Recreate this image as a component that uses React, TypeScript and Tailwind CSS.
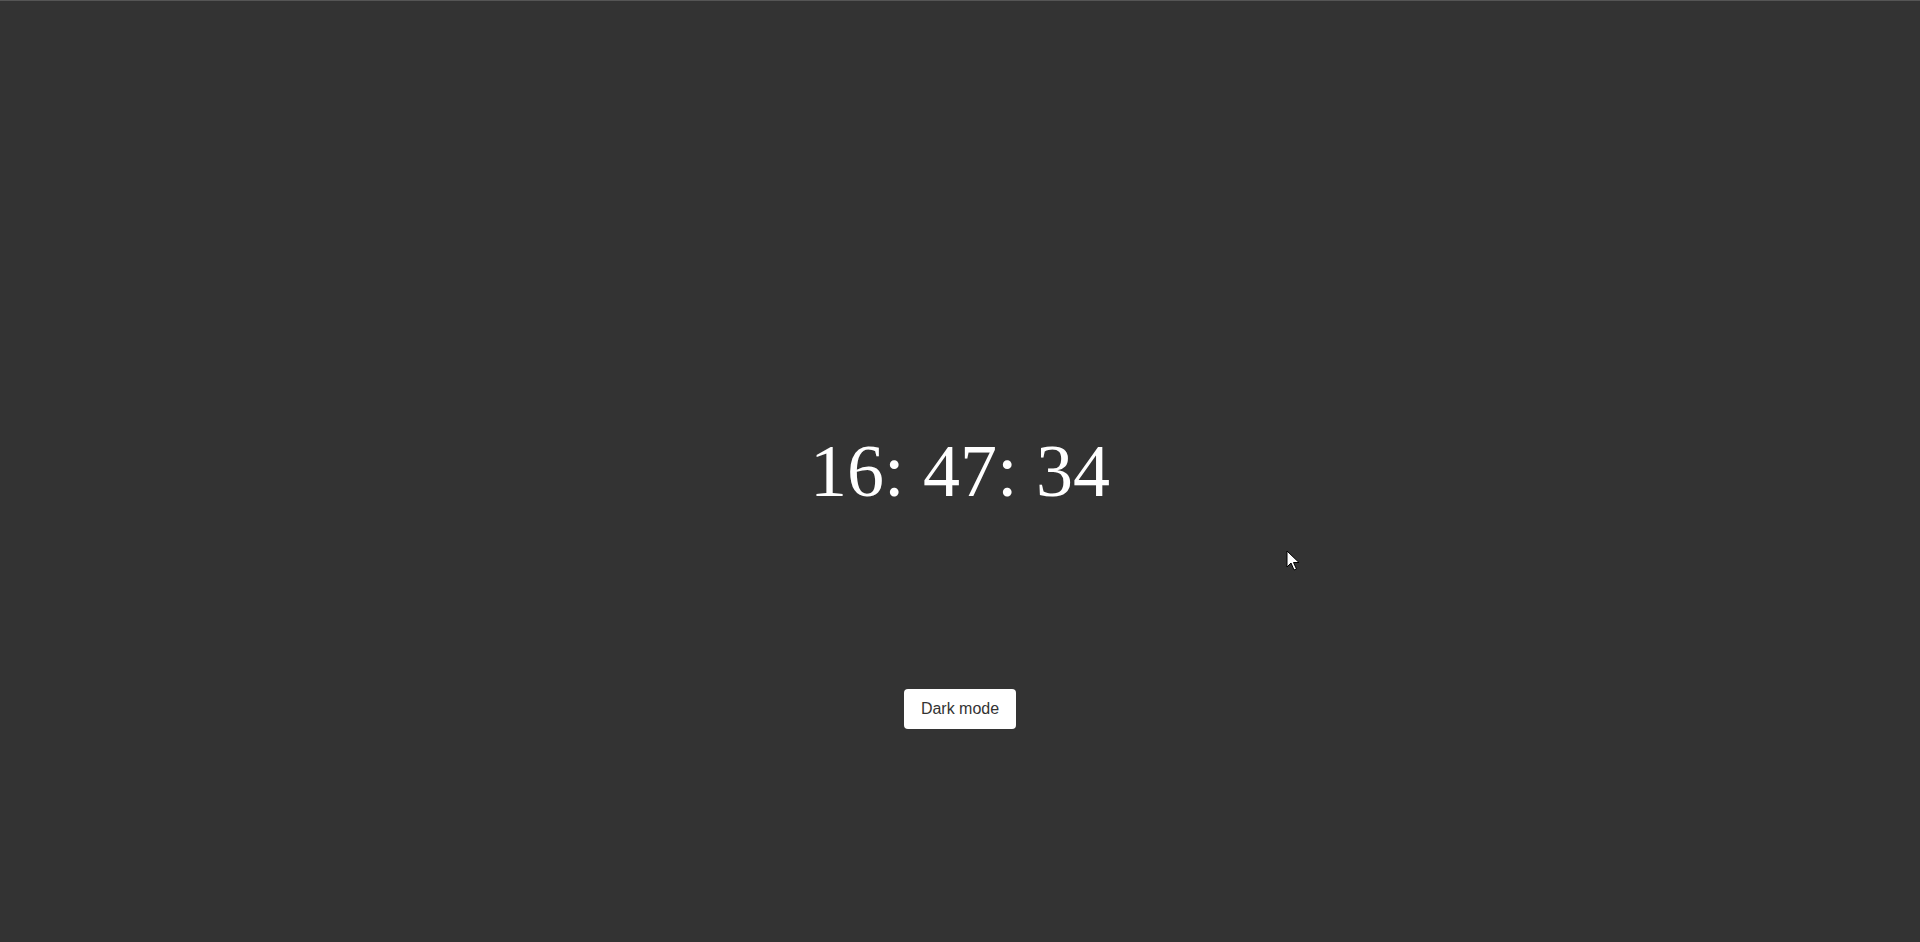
import { useEffect, useState } from 'react';

function pad(n: number) {
  return n.toString().padStart(2, '0');
}

export default function App() {
  // fixed to the captured time so the picture stays the same
  const [time] = useState({ h: 16, m: 47, s: 34 });
  const [dark, setDark] = useState(true);

  useEffect(() => {
    document.body.style.margin = '0';
  }, []);

  return (
    <div
      className={`relative h-screen w-full grid grid-rows-[1fr_auto_1fr] border-t border-[#555] ${
        dark ? 'bg-[#333333]' : 'bg-white'
      }`}
    >
      <div />
      <div
        className={`text-center text-[74px] leading-[87px] font-['Liberation_Serif','Times_New_Roman',serif] ${
          dark ? 'text-white' : 'text-[#333]'
        }`}
      >
        {pad(time.h)}: {pad(time.m)}: {pad(time.s)}
      </div>
      <div className="flex justify-center items-start pt-[174px]">
        <button
          type="button"
          onClick={() => setDark((d) => !d)}
          className="h-10 w-[112px] rounded bg-white text-[#333] text-base font-['Liberation_Sans',Arial,sans-serif] cursor-pointer"
        >
          Dark mode
        </button>
      </div>

      {/* mouse pointer from the screenshot */}
      <svg
        className="absolute left-[1286px] top-[549px] pointer-events-none"
        width="14"
        height="22"
        viewBox="0 0 14 22"
      >
        <path
          d="M1 1 L1 17 L5 13 L8 20 L10.5 19 L7.5 12.5 L13 12.5 Z"
          fill="white"
          stroke="black"
          strokeWidth="1"
          strokeLinejoin="round"
        />
      </svg>
    </div>
  );
}
